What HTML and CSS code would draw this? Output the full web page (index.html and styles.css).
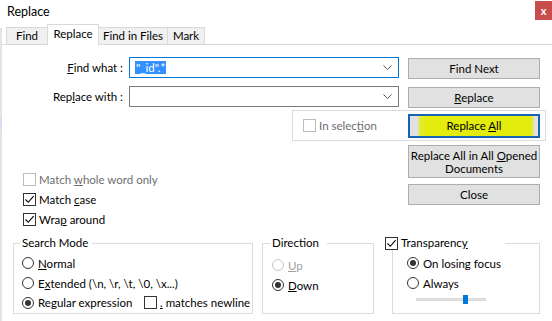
FILE: index.html
```html
<!DOCTYPE html>
<html lang="en">
<head>
    <meta charset="UTF-8">
    <title>Replace</title>
    <link rel="stylesheet" href="styles.css">
</head>
<body>
    <div class="titlebar">
        <span class="title">Replace</span>
        <span class="close">x</span>
    </div>
    <div class="window">
        <div class="edge"></div>
        <div class="content">
            <div class="tabs">
                <span class="tab tab-find">Find</span>
                <span class="tab tab-replace active">Replace</span>
                <span class="tab tab-files">Find in Files</span>
                <span class="tab tab-mark">Mark</span>
            </div>

            <div class="field-row first">
                <label class="field-label"><u>F</u>ind what :</label>
                <div class="combo focused">
                    <span class="selected-text">"_id".*</span>
                    <svg class="chevron" width="9" height="5" viewBox="0 0 9 5"><path d="M0.5 0.5 L4.5 4.5 L8.5 0.5" fill="none" stroke="#555" stroke-width="1"/></svg>
                </div>
                <button class="btn">Find Next</button>
            </div>
            <div class="field-row second">
                <label class="field-label">Rep<u>l</u>ace with :</label>
                <div class="combo">
                    <span class="selected-text empty"></span>
                    <svg class="chevron" width="9" height="5" viewBox="0 0 9 5"><path d="M0.5 0.5 L4.5 4.5 L8.5 0.5" fill="none" stroke="#555" stroke-width="1"/></svg>
                </div>
                <button class="btn"><u>R</u>eplace</button>
            </div>

            <div class="selection-box">
                <div class="check disabled">
                    <span class="box"></span>
                    <span>In selec<u>t</u>ion</span>
                </div>
                <button class="btn btn-default"><span>Replace <u>A</u>ll</span></button>
            </div>

            <div class="lower">
                <div class="options">
                    <div class="check disabled row-1">
                        <span class="box"></span>
                        <span>Match <u>w</u>hole word only</span>
                    </div>
                    <div class="check row-2">
                        <span class="box checked"><svg width="11" height="11" viewBox="0 0 11 11"><path d="M1.5 5.5 L4.3 8.3 L9.6 2.2" fill="none" stroke="#000" stroke-width="1.1"/></svg></span>
                        <span>Match <u>c</u>ase</span>
                    </div>
                    <div class="check row-3">
                        <span class="box checked"><svg width="11" height="11" viewBox="0 0 11 11"><path d="M1.5 5.5 L4.3 8.3 L9.6 2.2" fill="none" stroke="#000" stroke-width="1.1"/></svg></span>
                        <span>Wra<u>p</u> around</span>
                    </div>
                </div>
                <div class="side-buttons">
                    <button class="btn btn-tall">Replace All in All <u>O</u>pened<br>Documents</button>
                    <button class="btn btn-close">Close</button>
                </div>
            </div>

            <div class="groups">
                <div class="group group-mode">
                    <span class="legend">Search Mode</span>
                    <div class="radio">
                        <span class="dot"></span><span><u>N</u>ormal</span>
                    </div>
                    <div class="radio">
                        <span class="dot"></span><span>E<u>x</u>tended (\n, \r, \t, \0, \x...)</span>
                    </div>
                    <div class="radio last">
                        <span class="dot on"></span><span class="regex-label">Re<u>g</u>ular expression</span>
                        <span class="check newline">
                            <span class="box"></span>
                            <span><u>.</u> matches newline</span>
                        </span>
                    </div>
                </div>

                <div class="group group-direction">
                    <span class="legend">Direction</span>
                    <div class="radio disabled">
                        <span class="dot"></span><span><u>U</u>p</span>
                    </div>
                    <div class="radio">
                        <span class="dot on"></span><span><u>D</u>own</span>
                    </div>
                </div>

                <div class="group group-trans">
                    <span class="legend legend-check">
                        <span class="box checked"><svg width="11" height="11" viewBox="0 0 11 11"><path d="M1.5 5.5 L4.3 8.3 L9.6 2.2" fill="none" stroke="#000" stroke-width="1.1"/></svg></span>
                        <span>Transparenc<u>y</u></span>
                    </span>
                    <div class="radio">
                        <span class="dot on"></span><span>On losing focus</span>
                    </div>
                    <div class="radio">
                        <span class="dot"></span><span>Always</span>
                    </div>
                    <div class="slider">
                        <div class="track"><span class="thumb"></span></div>
                    </div>
                </div>
            </div>
        </div>
    </div>
</body>
</html>
```

FILE: styles.css
```css
* {
    box-sizing: border-box;
}
body {
    margin: 0;
    width: 552px;
    height: 321px;
    overflow: hidden;
    background-color: #fff;
    font-family: Lato, "Liberation Sans", sans-serif;
    font-size: 11.5px;
    color: #000;
    white-space: nowrap;
}
u {
    text-underline-offset: 1px;
}

/* title bar */
.titlebar {
    height: 24px;
    display: flex;
    justify-content: space-between;
    align-items: flex-start;
}
.title {
    padding: 4px 0 0 7px;
    font-size: 12.5px;
    line-height: 16px;
}
.close {
    width: 17px;
    height: 19px;
    margin-top: 1px;
    background-color: #c84d4d;
    color: #fff;
    font-weight: bold;
    font-size: 11px;
    display: flex;
    align-items: center;
    justify-content: center;
}

.window {
    display: flex;
}
.edge {
    width: 2px;
    height: 293px;
    margin-top: 4px;
    background: linear-gradient(#e4e4e4 0 89px, #dcdcf0 89px 102px, #e4e4e4 102px);
}
.content {
    width: 550px;
}

/* tabs */
.tabs {
    height: 21px;
    display: flex;
    align-items: flex-end;
    padding-left: 4px;
    border-bottom: 1px solid #d9d9d9;
}
.tab {
    height: 17px;
    line-height: 15px;
    text-align: center;
    background-color: #f0f0f0;
    border: 1px solid #d9d9d9;
    border-bottom: none;
    border-right: none;
}
.tab-find { width: 41px; }
.tab-replace { width: 52px; }
.tab-files { width: 68px; }
.tab-mark { width: 38px; border-right: 1px solid #d9d9d9; }
.tab.active {
    height: 21px;
    margin-bottom: -1px;
    line-height: 18px;
    background-color: #fff;
    border-right: 1px solid #d9d9d9;
}
.tab.active + .tab {
    border-left: none;
}

/* find / replace rows */
.field-row {
    display: flex;
    align-items: flex-start;
}
.field-row.first {
    margin-top: 12px;
}
.field-row.second {
    margin-top: 7px;
}
.field-label {
    width: 121px;
    line-height: 21px;
    text-align: right;
}
.combo {
    width: 270px;
    height: 21px;
    margin-left: 6px;
    border: 1px solid #7a7a7a;
    display: flex;
    align-items: center;
    justify-content: space-between;
    padding: 0 6px 0 5px;
}
.combo.focused {
    border-color: #0078d7;
}
.selected-text {
    background-color: #3390ff;
    color: #fff;
    line-height: 13px;
    padding: 0 1px;
}
.selected-text.empty {
    background: none;
}

.btn {
    font: inherit;
    color: #000;
    width: 132px;
    height: 21px;
    margin-left: 9px;
    margin-top: 1px;
    padding: 0;
    background-color: #e1e1e1;
    border: 1px solid #adadad;
    line-height: 13px;
    white-space: nowrap;
}

/* in selection */
.selection-box {
    width: 254px;
    height: 31px;
    margin: 2px 0 0 290px;
    border: 1px solid #dcdcdc;
    display: flex;
    align-items: center;
    padding-left: 10px;
}
.btn-default {
    width: 132px;
    height: 24px;
    margin: 0 5px 0 auto;
    border: 2px solid #1565b5;
    background: linear-gradient(90deg, #e1e1e1 0 7px, #e4ea40 10px, #e3ec0c 16px, #e3ec0c calc(100% - 7px), #e1e1e1 calc(100% - 3px));
}

/* checkboxes */
.check {
    display: flex;
    align-items: center;
    gap: 3px;
}
.box {
    width: 13px;
    height: 13px;
    border: 1px solid #333;
    background-color: #fff;
    display: inline-flex;
    align-items: center;
    justify-content: center;
    flex: none;
}
.check.disabled {
    color: #6d6d6d;
}
.check.disabled .box {
    border-color: #bcbcbc;
}

.lower {
    height: 102px;
    display: flex;
}
.options {
    width: 406px;
    padding: 28px 0 0 21px;
}
.options .check {
    height: 20px;
}
.options .row-1 {
    height: 21px;
}
.options .row-2 {
    height: 19px;
}
.side-buttons {
    display: flex;
    flex-direction: column;
}
.side-buttons .btn {
    margin-left: 0;
}
.btn-tall {
    height: 33px;
    margin-top: 4px !important;
}
.btn-close {
    margin-top: 6px !important;
}

/* group boxes */
.groups {
    display: flex;
    padding-left: 11px;
}
.group {
    height: 71px;
    border: 1px solid #dcdcdc;
}
.group-mode {
    width: 240px;
    padding-left: 8px;
}
.group-direction {
    width: 112px;
    margin-left: 9px;
    padding-left: 9px;
}
.group-trans {
    width: 148px;
    margin-left: 18px;
    padding-left: 14px;
}
.legend {
    display: block;
    width: max-content;
    height: 14px;
    line-height: 14px;
    margin: -8px 0 3px -2px;
    padding: 0 2px;
    background-color: #fff;
}
.group-direction .legend {
    margin-bottom: 5px;
    padding-right: 8px;
}
.group-mode .legend {
    padding-right: 4px;
}
.legend-check {
    display: flex;
    align-items: center;
    gap: 3px;
    width: 120px;
    margin-left: -22px;
    padding: 0;
}

.radio {
    display: flex;
    align-items: center;
    gap: 4px;
    height: 20px;
}
.radio.last {
    height: 19px;
}
.dot {
    width: 12px;
    height: 12px;
    border: 1px solid #333;
    border-radius: 50%;
    background-color: #fff;
    display: inline-flex;
    align-items: center;
    justify-content: center;
    flex: none;
}
.dot.on::after {
    content: "";
    width: 6px;
    height: 6px;
    border-radius: 50%;
    background-color: #333;
}
.radio.disabled {
    color: #a0a0a0;
}
.radio.disabled .dot {
    border-color: #c8c8c8;
}
.regex-label {
    width: 102px;
}
.check.newline {
    margin-left: 0;
}

/* transparency slider */
.slider {
    width: 70px;
    height: 9px;
    margin: 2px 0 0 9px;
    display: flex;
    align-items: center;
}
.track {
    width: 100%;
    height: 3px;
    background-color: #e7e7e7;
    border: 1px solid #d6d6d6;
    display: flex;
    align-items: center;
}
.thumb {
    width: 5px;
    height: 9px;
    margin-left: 46px;
    background-color: #0078d7;
    flex: none;
}
```
